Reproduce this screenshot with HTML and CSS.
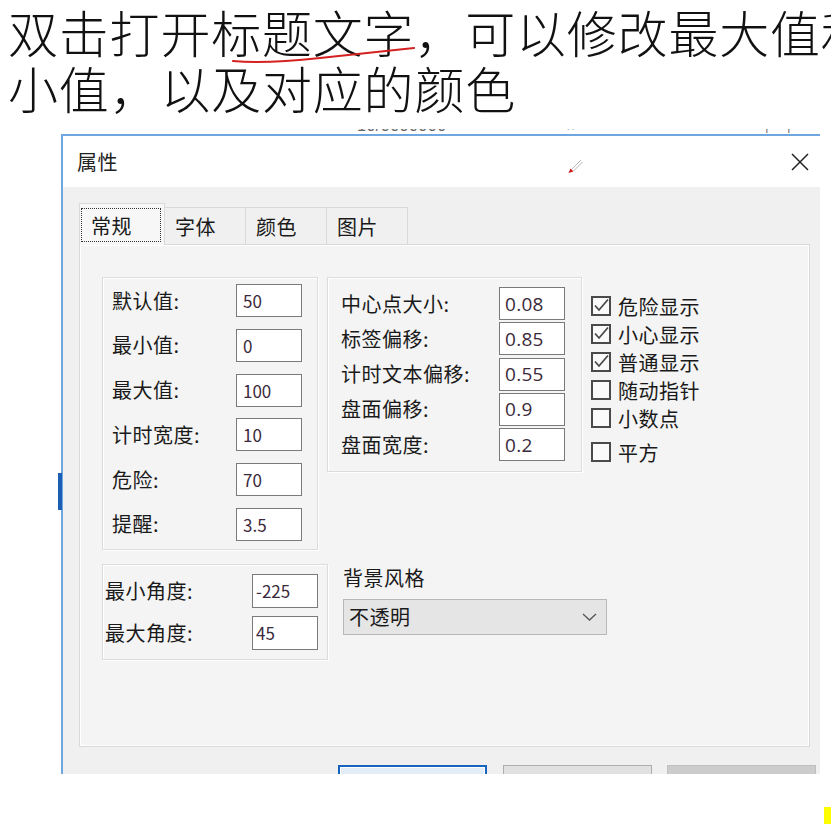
FILE: index.html
```html
<!DOCTYPE html>
<html lang="zh-CN">
<head>
    <meta charset="UTF-8">
    <meta name="viewport" content="width=device-width, initial-scale=1.0">
    <title>属性</title>
    <link rel="stylesheet" href="styles.css">
</head>
<body>
    <div class="caption">
        <div class="line">双击打开标题文字，可以修改最大值和最</div>
        <div class="line">小值，以及对应的颜色</div>
        <svg class="scribble" width="831" height="120" viewBox="0 0 831 120">
            <path d="M233 61 Q265 64 320 58 T414 48" fill="none" stroke="#d42222" stroke-width="2.2" stroke-linecap="round"/>
        </svg>
    </div>

    <div class="behind">
        <span class="behind-text">10/0000000</span>
        <span class="behind-mark">∩</span>
        <span class="behind-tick">|</span>
        <span class="behind-tick second">|</span>
    </div>

    <div class="dialog">
        <span class="dock-mark"></span>
        <div class="titlebar">
            <span class="title">属性</span>
            <svg class="pen" width="16" height="16" viewBox="0 0 16 16">
                <path d="M4.5 11.5 L14 2 M6.5 13 L15.5 4" stroke="#b5b5b5" stroke-width="1" fill="none"/>
                <polygon points="1.5,15 3.5,10.5 6.5,13.5" fill="#d11a1a"/>
            </svg>
            <svg class="close" width="18" height="18" viewBox="0 0 18 18">
                <path d="M1 1 L17 17 M17 1 L1 17" stroke="#222" stroke-width="1.5" fill="none"/>
            </svg>
        </div>

        <div class="dialog-body">
            <div class="tabs">
                <div class="tab selected"><span class="focus">常规</span></div>
                <div class="tab">字体</div>
                <div class="tab">颜色</div>
                <div class="tab">图片</div>
            </div>

            <div class="panel">
                <div class="row">
                    <div class="group values">
                        <span class="label">默认值:</span><input class="field" type="text" value="50" readonly>
                        <span class="label">最小值:</span><input class="field" type="text" value="0" readonly>
                        <span class="label">最大值:</span><input class="field" type="text" value="100" readonly>
                        <span class="label">计时宽度:</span><input class="field" type="text" value="10" readonly>
                        <span class="label">危险:</span><input class="field" type="text" value="70" readonly>
                        <span class="label">提醒:</span><input class="field" type="text" value="3.5" readonly>
                    </div>

                    <div class="group offsets">
                        <span class="label">中心点大小:</span><input class="field" type="text" value="0.08" readonly>
                        <span class="label">标签偏移:</span><input class="field" type="text" value="0.85" readonly>
                        <span class="label">计时文本偏移:</span><input class="field" type="text" value="0.55" readonly>
                        <span class="label">盘面偏移:</span><input class="field" type="text" value="0.9" readonly>
                        <span class="label">盘面宽度:</span><input class="field" type="text" value="0.2" readonly>
                    </div>

                    <div class="checks">
                        <div class="check on"><span class="box"></span>危险显示</div>
                        <div class="check on"><span class="box"></span>小心显示</div>
                        <div class="check on"><span class="box"></span>普通显示</div>
                        <div class="check"><span class="box"></span>随动指针</div>
                        <div class="check"><span class="box"></span>小数点</div>
                        <div class="check last"><span class="box"></span>平方</div>
                    </div>
                </div>

                <div class="row second">
                    <div class="group angles">
                        <span class="label">最小角度:</span><input class="field" type="text" value="-225" readonly>
                        <span class="label">最大角度:</span><input class="field" type="text" value="45" readonly>
                    </div>

                    <div class="style-col">
                        <div class="style-label">背景风格</div>
                        <div class="select">
                            <span>不透明</span>
                            <svg width="15" height="8" viewBox="0 0 15 8">
                                <polyline points="1,1 7.5,7 14,1" fill="none" stroke="#555" stroke-width="1.3"/>
                            </svg>
                        </div>
                    </div>
                </div>
            </div>

            <div class="buttons">
                <div class="btn default"></div>
                <div class="btn"></div>
                <div class="btn disabled"></div>
            </div>
        </div>
    </div>

    <div class="footer">
        <span class="marker"></span>
    </div>

    <script>
        // paint the check marks into the boxes
        document.querySelectorAll(".check.on .box").forEach(function (box) {
            box.innerHTML = '<svg width="20" height="20" viewBox="0 0 20 20"><path d="M4 9.5 L8 14 L17 3.5" fill="none" stroke="#4a4a4a" stroke-width="1.8"/></svg>';
        });
    </script>
</body>
</html>
```

FILE: styles.css
```css
body {
    margin: 0;
    height: 824px;
    overflow: hidden;
    background: #fff;
    font-family: "Noto Sans CJK SC", "Noto Sans", sans-serif;
    color: #1a1a1a;
}

/* Caption above the screenshot */
.caption {
    position: relative;
    padding: 3px 0 0 8px;
    font-size: 50px;
    line-height: 56px;
    letter-spacing: 0.8px;
    font-weight: 300;
    color: #111;
    white-space: nowrap;
    overflow: hidden;
}

.scribble {
    position: absolute;
    left: 0;
    top: 0;
}

/* Window behind the dialog, only its bottom edge shows */
.behind {
    margin-top: 14px;
    height: 5px;
    overflow: hidden;
    display: flex;
    align-items: flex-end;
    font-family: "Liberation Sans", sans-serif;
    font-size: 16px;
    line-height: 16px;
    color: #666;
}

.behind-text {
    margin-left: 357px;
    letter-spacing: 0.5px;
}

.behind-mark {
    margin-left: 120px;
    font-size: 12px;
}

.behind-tick {
    margin-left: 190px;
    font-size: 12px;
}

.behind-tick.second {
    margin-left: 19px;
}

/* Dialog */
.dialog {
    position: relative;
    margin-left: 61px;
    width: 759px;
    box-sizing: border-box;
    border-top: 2px solid #6ea6df;
    border-left: 2px solid #6ea6df;
}

.dock-mark {
    position: absolute;
    left: -5px;
    top: 337px;
    width: 4px;
    height: 37px;
    background: #1a5fb4;
}

.titlebar {
    position: relative;
    height: 51px;
    display: flex;
    align-items: center;
    justify-content: space-between;
    padding: 0 11px 0 14px;
    background: #fff;
}

.title {
    font-size: 20px;
    letter-spacing: 0.5px;
    color: #222;
}

.pen {
    position: absolute;
    left: 504px;
    top: 22px;
}

.dialog-body {
    height: 587px;
    box-sizing: border-box;
    padding: 16px 0 0 16px;
    background: #f0f0f0;
    overflow: hidden;
    font-size: 20px;
    letter-spacing: 0.5px;
}

.tabs {
    display: flex;
    align-items: flex-end;
    height: 41px;
}

.tab {
    box-sizing: border-box;
    width: 82px;
    height: 37px;
    margin-left: -1px;
    padding-left: 10px;
    display: flex;
    align-items: center;
    border: 1px solid #d9d9d9;
    border-bottom: none;
    background: #f0f0f0;
}

.tab.selected {
    position: relative;
    z-index: 1;
    width: 86px;
    height: 42px;
    margin: 0 0 -1px 0;
    padding: 4px 3px 3px 1px;
    background: #f7f7f7;
}

.focus {
    box-sizing: border-box;
    width: 81px;
    height: 34px;
    padding-left: 9px;
    display: flex;
    align-items: center;
    border: 1px dotted #333;
}

.panel {
    width: 731px;
    height: 503px;
    box-sizing: border-box;
    padding: 32px 0 0 22px;
    border: 1px solid #d9d9d9;
    box-shadow: inset 0 0 0 1px #fff;
    background: #f4f4f4;
}

.row {
    display: flex;
    align-items: flex-start;
}

.row.second {
    margin-top: 14px;
}

.group {
    box-sizing: border-box;
    display: grid;
    align-items: center;
    border: 1px solid #dcdcdc;
    box-shadow: inset 1px 1px 0 #fff, 1px 1px 0 #fff;
}

.label {
    white-space: nowrap;
    line-height: 1;
}

.field {
    box-sizing: border-box;
    width: 66px;
    height: 33px;
    margin: 0;
    padding: 0 0 0 6px;
    border: 1px solid #7a7a7a;
    background: #fff;
    font-family: "Noto Sans CJK SC", sans-serif;
    font-size: 17px;
    color: #3b2a3b;
    outline: none;
}

.values {
    width: 216px;
    padding: 6px 15px 8px 9px;
    grid-template-columns: 1fr 66px;
    row-gap: 11.8px;
}

.offsets {
    width: 255px;
    margin-left: 9px;
    padding: 9px 16px 10px 13px;
    grid-template-columns: 1fr 66px;
    row-gap: 2.3px;
}

.offsets .field {
    padding-left: 5px;
    font-family: "Open Sans", sans-serif;
    font-size: 19px;
    letter-spacing: 0.3px;
}

.checks {
    margin: 15px 0 0 9px;
}

.check {
    height: 28px;
    display: flex;
    align-items: center;
    gap: 7px;
}

.check.last {
    margin-top: 6px;
}

.box {
    box-sizing: border-box;
    width: 20px;
    height: 20px;
    border: 2px solid #4a4a4a;
    background: #fafafa;
    display: flex;
    align-items: center;
    justify-content: center;
}

.box svg {
    flex: none;
}

.angles {
    width: 226px;
    padding: 8.6px 9px 9px 2px;
    grid-template-columns: 1fr 66px;
    row-gap: 8.4px;
}

.angles .field {
    height: 34px;
    padding-left: 3px;
}

.style-col {
    margin-left: 15px;
}

.style-label {
    line-height: 28px;
}

.select {
    box-sizing: border-box;
    width: 264px;
    height: 36px;
    margin-top: 7px;
    padding: 0 9px 0 5px;
    display: flex;
    align-items: center;
    justify-content: space-between;
    border: 1px solid #b8b8b8;
    background: #e5e5e5;
}

.buttons {
    margin-top: 18px;
    padding-right: 4px;
    display: flex;
    justify-content: flex-end;
    gap: 15px;
}

.btn {
    box-sizing: border-box;
    width: 149px;
    height: 30px;
    border: 1px solid #adadad;
    background: #e1e1e1;
}

.btn.default {
    margin-right: 1px;
    border: 2px solid #1664c0;
    background: #e3edf7;
    box-shadow: inset 0 0 0 1px #fff;
}

.btn.disabled {
    background: #cccccc;
    border-color: #bfbfbf;
}

.footer {
    height: 50px;
    display: flex;
    justify-content: flex-end;
    align-items: flex-end;
}

.marker {
    width: 7px;
    height: 17px;
    background: #ffff00;
}
```
